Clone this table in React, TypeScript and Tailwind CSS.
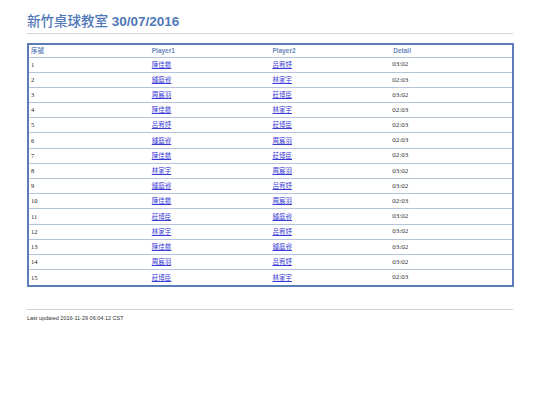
const rows: [string, string, string][] = [
  ["陳佳慈", "呂宥妤", "03:02"],
  ["鍾庭睿", "林家宇", "02:03"],
  ["周宸羽", "莊博臣", "03:02"],
  ["陳佳慈", "林家宇", "02:03"],
  ["呂宥妤", "莊博臣", "02:03"],
  ["鍾庭睿", "周宸羽", "02:03"],
  ["陳佳慈", "莊博臣", "02:03"],
  ["林家宇", "周宸羽", "03:02"],
  ["鍾庭睿", "呂宥妤", "03:02"],
  ["陳佳慈", "周宸羽", "02:03"],
  ["莊博臣", "鍾庭睿", "03:02"],
  ["林家宇", "呂宥妤", "03:02"],
  ["陳佳慈", "鍾庭睿", "03:02"],
  ["周宸羽", "呂宥妤", "03:02"],
  ["莊博臣", "林家宇", "02:03"],
];

const cjk = "font-['Liberation_Sans','Noto_Sans_CJK_TC',sans-serif]";

export default function App() {
  return (
    <div className="w-[540px] h-[405px] bg-white px-[27px] pt-[13px]">
      <h1 className={`${cjk} text-[13.5px] leading-[18px] font-bold text-[#4f78b8] pb-[2px] border-b border-[#d6d6d6]`}>
        <span className="font-medium">新竹桌球教室</span> 30/07/2016
      </h1>
      <div className="mt-[9px] w-[487px] border-2 border-[#5b7cb8]">
        <div className={`${cjk} grid grid-cols-4 h-[12.5px] items-center text-[6.5px] font-bold text-[#6a88bd] border-b border-[#b5c4dc]`}>
          <div className="pl-[2px]">序號</div>
          <div className="pl-[2px]">Player1</div>
          <div className="pl-[2px]">Player2</div>
          <div className="pl-[2px]">Detail</div>
        </div>
        {rows.map(([p1, p2, d], i) => (
          <div
            key={i}
            className={`grid grid-cols-4 h-[15.2px] items-center text-[6.5px] ${i < rows.length - 1 ? "border-b border-[#b5c4dc]" : ""}`}
          >
            <div className="pl-[2px] font-['Liberation_Serif',serif] text-[6.5px] text-[#222]">{i + 1}</div>
            <div className="pl-[2px]">
              <a className={`${cjk} text-[#3b3bd6] underline`} href="#">{p1}</a>
            </div>
            <div className="pl-[2px]">
              <a className={`${cjk} text-[#3b3bd6] underline`} href="#">{p2}</a>
            </div>
            <div className="pl-[1px] font-['Liberation_Serif',serif] text-[7px] text-[#333]">{d}</div>
          </div>
        ))}
      </div>
      <div className={`${cjk} mt-[22px] border-t border-[#d0d0d0] pt-[4px] text-[5.5px] text-[#333]`}>
        Last updated 2016-11-29 06:04:12 CST
      </div>
    </div>
  );
}
